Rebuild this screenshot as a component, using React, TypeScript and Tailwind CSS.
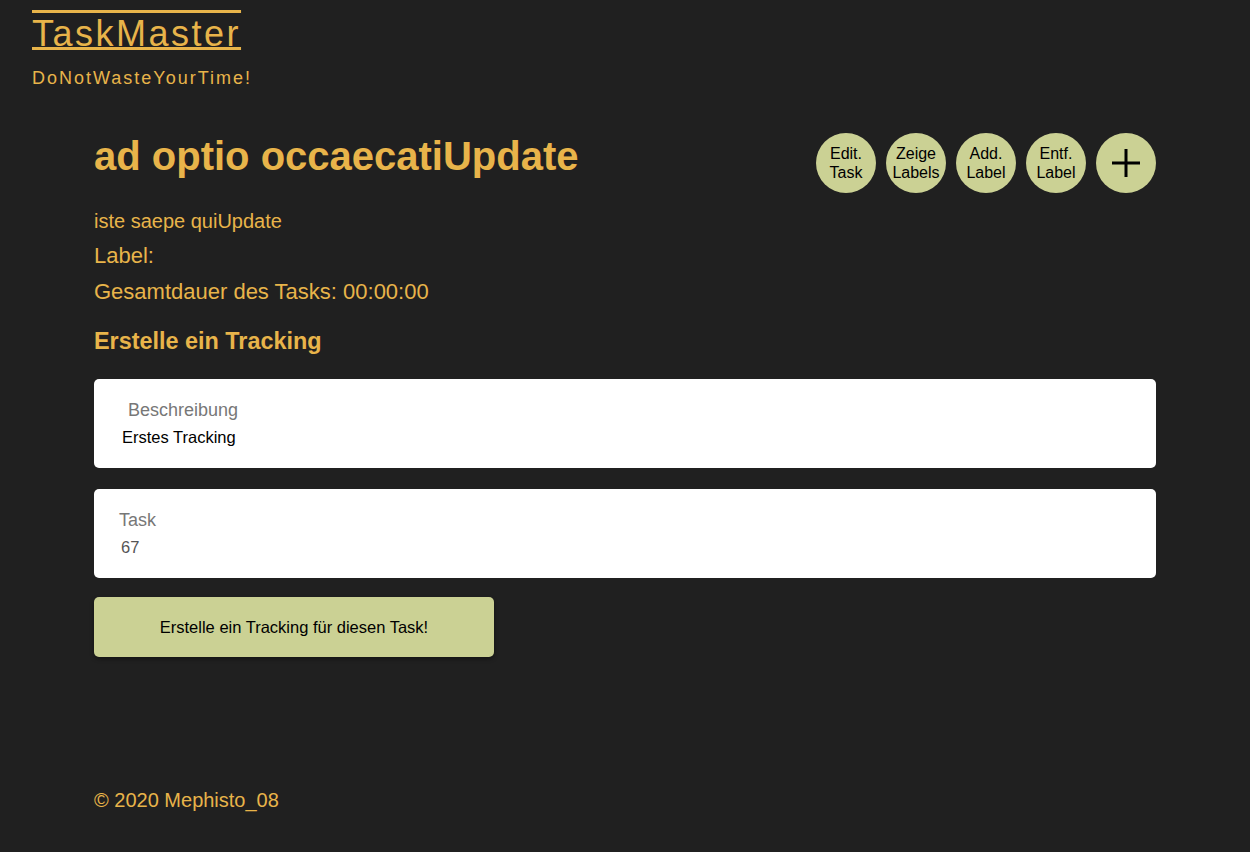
import React from "react";

const gold = "text-[#e8b44a]";

const RoundButton: React.FC<{ top: string; bottom: string }> = ({ top, bottom }) => (
  <button className="w-[60px] h-[60px] rounded-full bg-[#cbd194] text-black text-[16px] leading-[19px] flex flex-col items-center justify-center">
    <span>{top}</span>
    <span>{bottom}</span>
  </button>
);

const Field: React.FC<{ label: string; value: string; labelClass: string; valueClass: string }> = ({
  label,
  value,
  labelClass,
  valueClass,
}) => (
  <div className="bg-white rounded-[5px] h-[89px] flex flex-col pt-[20px]">
    <span className={labelClass}>{label}</span>
    <span className={valueClass}>{value}</span>
  </div>
);

export default function App() {
  return (
    <div
      className="min-h-[852px] bg-[#202020] flex flex-col"
      style={{ fontFamily: '"Liberation Sans", Arial, sans-serif' }}
    >
      <header className="pl-[32px] pt-[12px]">
        <h1
          className={`${gold} text-[36px] leading-[44px] tracking-[2.5px] [text-decoration-line:underline_overline] decoration-[3px] underline-offset-[1px] inline-block`}
        >
          TaskMaster
        </h1>
        <p className={`${gold} text-[18px] leading-[24px] tracking-[2px] mt-[10px]`}>DoNotWasteYourTime!</p>
      </header>

      <main className="px-[94px] pt-[32px] flex flex-col">
        <div className="flex items-start justify-between">
          <h2 className={`${gold} text-[40px] font-bold leading-[46px] mt-[11px]`}>ad optio occaecatiUpdate</h2>
          <div className="flex gap-[10px] mt-[11px]">
            <RoundButton top="Edit." bottom="Task" />
            <RoundButton top="Zeige" bottom="Labels" />
            <RoundButton top="Add." bottom="Label" />
            <RoundButton top="Entf." bottom="Label" />
            <button className="w-[60px] h-[60px] rounded-full bg-[#cbd194] flex items-center justify-center">
              <svg width="32" height="32" viewBox="0 0 32 32" fill="none" stroke="black" strokeWidth="3">
                <path d="M16 2v28M2 16h28" />
              </svg>
            </button>
          </div>
        </div>

        <p className={`${gold} text-[20px] leading-[24px] mt-[16px]`}>iste saepe quiUpdate</p>
        <p className={`${gold} text-[22px] leading-[26px] mt-[10px]`}>Label:</p>
        <p className={`${gold} text-[22px] leading-[26px] mt-[10px]`}>Gesamtdauer des Tasks: 00:00:00</p>
        <h3 className={`${gold} text-[23.4px] font-bold leading-[28px] mt-[22px]`}>Erstelle ein Tracking</h3>

        <div className="mt-[24px] flex flex-col gap-[21px]">
          <Field
            label="Beschreibung"
            value="Erstes Tracking"
            labelClass="pl-[34px] text-[18px] leading-[22px] text-[#777777]"
            valueClass="pl-[28px] text-[16.5px] leading-[20px] text-black mt-[6px]"
          />
          <Field
            label="Task"
            value="67"
            labelClass="pl-[25px] text-[18px] leading-[22px] text-[#777777]"
            valueClass="pl-[27px] text-[16.5px] leading-[20px] text-[#555555] mt-[6px]"
          />
        </div>

        <button className="mt-[19px] w-[400px] h-[60px] rounded-[5px] bg-[#cbd194] text-black text-[16.5px] shadow-[0_2px_4px_rgba(0,0,0,0.4)]">
          Erstelle ein Tracking für diesen Task!
        </button>
      </main>

      <footer className={`${gold} px-[94px] mt-[131px] text-[20px] leading-[24px]`}>© 2020 Mephisto_08</footer>
    </div>
  );
}
